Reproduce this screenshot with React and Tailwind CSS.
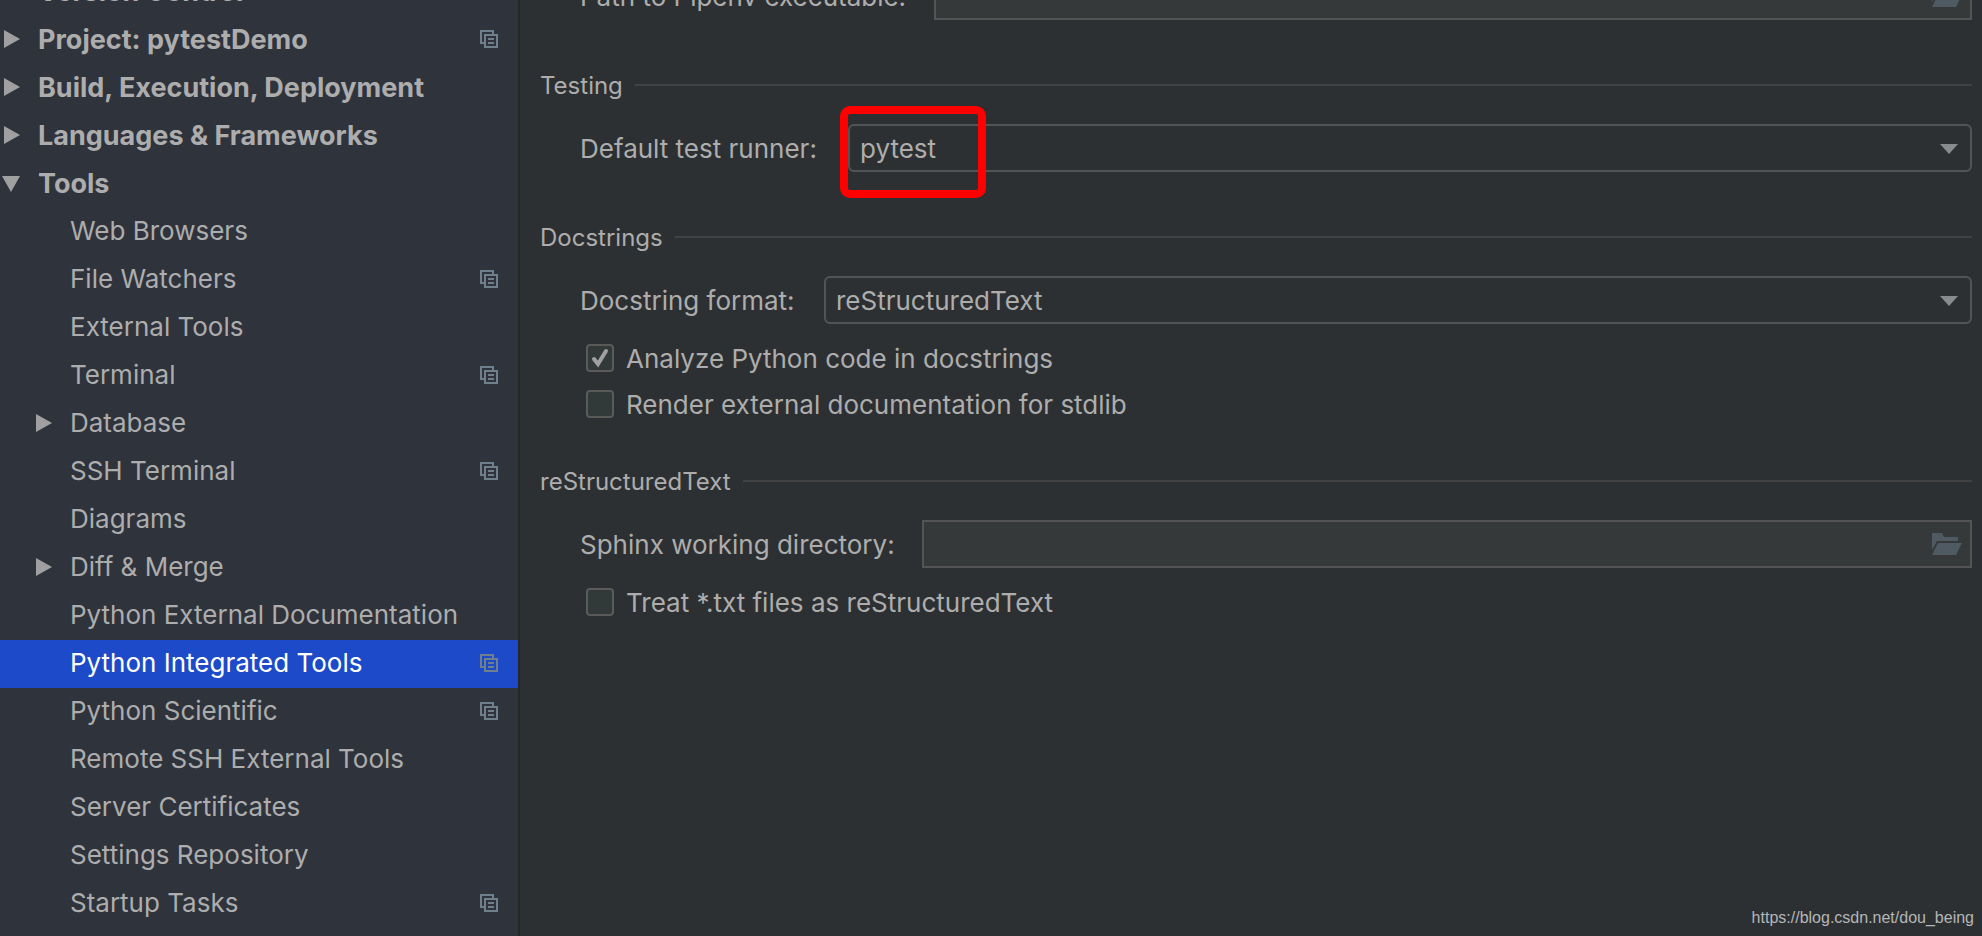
import { useState } from "react";

const treeItems = [
  { label: "Version Control", level: 0, arrow: "right" },
  { label: "Project: pytestDemo", level: 0, arrow: "right", copy: true },
  { label: "Build, Execution, Deployment", level: 0, arrow: "right" },
  { label: "Languages & Frameworks", level: 0, arrow: "right" },
  { label: "Tools", level: 0, arrow: "down" },
  { label: "Web Browsers", level: 1 },
  { label: "File Watchers", level: 1, copy: true },
  { label: "External Tools", level: 1 },
  { label: "Terminal", level: 1, copy: true },
  { label: "Database", level: 1, arrow: "right" },
  { label: "SSH Terminal", level: 1, copy: true },
  { label: "Diagrams", level: 1 },
  { label: "Diff & Merge", level: 1, arrow: "right" },
  { label: "Python External Documentation", level: 1 },
  { label: "Python Integrated Tools", level: 1, copy: true },
  { label: "Python Scientific", level: 1, copy: true },
  { label: "Remote SSH External Tools", level: 1 },
  { label: "Server Certificates", level: 1 },
  { label: "Settings Repository", level: 1 },
  { label: "Startup Tasks", level: 1, copy: true },
];

function Arrow({ direction }) {
  return (
    <svg width="20" height="20" viewBox="0 0 20 20" fill="#a0a0a0" aria-hidden="true">
      {direction === "right" && <path d="M3 1L19 10L3 19Z" />}
      {direction === "down" && <path d="M1 3H19L10 19Z" />}
    </svg>
  );
}

function CopyIcon() {
  return (
    <svg width="18" height="18" viewBox="0 0 18 18" fill="none" stroke="#6f808c" strokeWidth="2" aria-hidden="true">
      <path d="M13 4V1H1V13H4" />
      <rect x="5" y="5" width="12" height="12" />
      <path d="M8 9H14M8 13H14" />
    </svg>
  );
}

function FolderIcon() {
  return (
    <svg width="30" height="22" viewBox="0 0 30 22" fill="#4f5a62" aria-hidden="true">
      <path d="M0 0H10L12 4H26V8H5L0 17Z" />
      <path d="M6 10H30L24 22H0Z" />
    </svg>
  );
}

function TreeRow({ item, selected, onSelect }) {
  return (
    <li>
      <button
        onClick={onSelect}
        className={`flex h-12 w-full items-center pb-0.5 pr-5 text-left whitespace-nowrap ${
          item.level === 0 ? "pl-px text-[27px] font-bold" : "pl-[33px]"
        } ${selected ? "bg-[#1c4ac8] text-white" : ""}`}
      >
        <span className="w-5 shrink-0">
          <Arrow direction={item.arrow} />
        </span>
        <span className={`flex-1 pl-[17px] ${item.level === 0 ? "pt-0.5" : ""}`}>{item.label}</span>
        {item.copy && <CopyIcon />}
      </button>
    </li>
  );
}

function SectionTitle({ children, className = "mt-12" }) {
  return (
    <div className={`${className} mb-[22px] flex h-[34px] items-center gap-3`}>
      <h2 className="pt-0.5 text-[24px]">{children}</h2>
      <div className="h-0.5 flex-1 bg-[#424242]" />
    </div>
  );
}

function SelectRow({ id, label, labelWidth, value, options, onChange, highlight }) {
  return (
    <div className="flex items-center pl-10">
      <label htmlFor={id} className={`${labelWidth} shrink-0 pt-0.5 whitespace-nowrap`}>
        {label}
      </label>
      <div className="relative flex-1">
        <select
          id={id}
          value={value}
          onChange={(e) => onChange(e.target.value)}
          className="block h-12 w-full appearance-none rounded-md border-2 border-[#545454] bg-[#2d3032] px-2.5 pt-0.5 outline-none"
        >
          {options.map((o) => (
            <option key={o}>{o}</option>
          ))}
        </select>
        <svg className="pointer-events-none absolute right-3.5 top-5" width="18" height="10" viewBox="0 0 18 10" fill="#888c8f" aria-hidden="true">
          <path d="M0 0H18L9 10Z" />
        </svg>
        {highlight && (
          <div className="pointer-events-none absolute -left-2 -top-[18px] h-[92px] w-[146px] rounded-[10px] border-8 border-[#ff0000]" />
        )}
      </div>
    </div>
  );
}

function PathRow({ id, label, labelWidth }) {
  return (
    <div className="flex items-center pl-10">
      <label htmlFor={id} className={`${labelWidth} shrink-0 pt-0.5 whitespace-nowrap`}>
        {label}
      </label>
      <div className="flex h-12 flex-1 items-center border-2 border-[#545454] bg-[#363939] pr-2">
        <input id={id} type="text" className="min-w-0 flex-1 bg-transparent px-2.5 outline-none" />
        <button aria-label="Browse">
          <FolderIcon />
        </button>
      </div>
    </div>
  );
}

function CheckRow({ label, defaultChecked }) {
  return (
    <label className="flex h-7 items-center gap-3 pl-[46px]">
      <span className="relative h-7 w-7">
        <input
          type="checkbox"
          defaultChecked={defaultChecked}
          className="peer block h-7 w-7 appearance-none rounded border-2 border-[#5a5a58] bg-[#313939]"
        />
        <svg className="pointer-events-none absolute left-1 top-1 hidden peer-checked:block" width="20" height="20" viewBox="0 0 20 20" fill="none" stroke="#a0a0a0" strokeWidth="4" strokeLinecap="round" aria-hidden="true">
          <path d="M4 11L8 16L16 3" />
        </svg>
      </span>
      <span className="pt-0.5">{label}</span>
    </label>
  );
}

export default function App() {
  const [selected, setSelected] = useState("Python Integrated Tools");
  const [runner, setRunner] = useState("pytest");
  const [format, setFormat] = useState("reStructuredText");

  return (
    <div className="relative flex h-screen overflow-hidden bg-[#2d3032] text-[26px] leading-8 text-[#adadad]" style={{ fontFamily: "Inter, 'Liberation Sans', sans-serif" }}>
      <nav className="w-[520px] shrink-0 overflow-hidden border-r-2 border-[#262728] bg-[#2f333c]">
        <ul className="-mt-8">
          {treeItems.map((item) => (
            <TreeRow key={item.label} item={item} selected={item.label === selected} onSelect={() => setSelected(item.label)} />
          ))}
        </ul>
      </nav>

      <main className="-mt-7 min-w-0 flex-1 pl-5 pr-2.5">
        <PathRow id="pipenv" label="Path to Pipenv executable:" labelWidth="w-[354px]" />

        <SectionTitle>Testing</SectionTitle>
        <SelectRow
          id="runner"
          label="Default test runner:"
          labelWidth="w-[268px]"
          value={runner}
          options={["pytest", "Unittests", "Nosetests", "Twisted Trial"]}
          onChange={setRunner}
          highlight
        />

        <SectionTitle>Docstrings</SectionTitle>
        <SelectRow
          id="format"
          label="Docstring format:"
          labelWidth="w-[244px]"
          value={format}
          options={["reStructuredText", "Plain", "Epytext", "NumPy", "Google"]}
          onChange={setFormat}
        />
        <div className="mt-5 flex flex-col gap-[18px]">
          <CheckRow label="Analyze Python code in docstrings" defaultChecked />
          <CheckRow label="Render external documentation for stdlib" />
        </div>

        <SectionTitle className="mt-[46px]">reStructuredText</SectionTitle>
        <PathRow id="sphinx" label="Sphinx working directory:" labelWidth="w-[342px]" />
        <div className="mt-5">
          <CheckRow label="Treat *.txt files as reStructuredText" />
        </div>
      </main>

      <a
        href="https://blog.csdn.net/dou_being"
        className="absolute bottom-2 right-2 text-[16px] leading-5 text-[#b4b6b7]"
        style={{ fontFamily: "'Liberation Sans', Arial, sans-serif" }}
      >
        https://blog.csdn.net/dou_being
      </a>
    </div>
  );
}
